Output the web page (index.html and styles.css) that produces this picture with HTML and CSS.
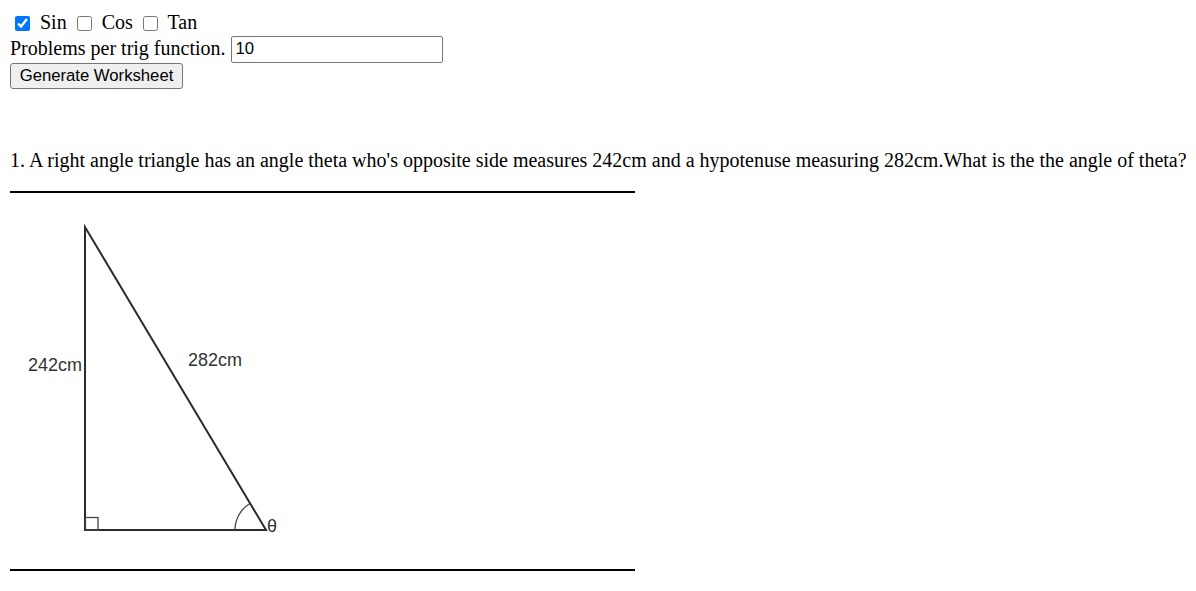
FILE: index.html
```html
<!DOCTYPE html>
<html>
<head>
<meta charset="utf-8">
<link rel="stylesheet" href="styles.css">
</head>
<body>
<div class="options"><input type="checkbox" class="cb" checked> Sin <input type="checkbox" class="cb"> Cos <input type="checkbox" class="cb"> Tan</div>
<div class="count-row">Problems per trig function. <input type="text" class="count" value="10"></div>
<div class="btn-row"><button class="gen">Generate Worksheet</button></div>
<div class="worksheet">
  <p class="question">1. A right angle triangle has an angle theta who's opposite side measures 242cm and a hypotenuse measuring 282cm.What is the the angle of theta?</p>
  <div class="rule"></div>
  <svg class="diagram" width="300" height="376" viewBox="0 0 300 376">
    <g fill="none" stroke="#2b2b2b" stroke-width="2">
      <path d="M75 34 L75 337 L256 337 Z" stroke-linejoin="miter"/>
    </g>
    <rect x="75.5" y="324.5" width="12.5" height="12.5" fill="none" stroke="#444" stroke-width="1.3"/>
    <path d="M225 337 A31 31 0 0 1 239.5 310.7" fill="none" stroke="#444" stroke-width="1.3"/>
    <text x="18" y="178" class="lbl">242cm</text>
    <text x="178" y="173" class="lbl">282cm</text>
    <text x="257" y="339" class="lbl">θ</text>
  </svg>
  <div class="rule"></div>
</div>
</body>
</html>
```
FILE: styles.css
```css
body {
  margin: 10px;
  font-family: "Liberation Serif", "Times New Roman", serif;
  font-size: 20px;
  color: #000;
  background: #fff;
}
.options {
  height: 24px;
  line-height: 24px;
}
.cb {
  width: 15px;
  height: 15px;
  margin: 0 5px 0 5px;
  vertical-align: -2px;
}
.count-row {
  height: 29px;
  line-height: 29px;
}
.count {
  box-sizing: border-box;
  width: 212px;
  height: 27px;
  margin: 0;
  padding: 1px 4px;
  font-family: "Liberation Sans", Arial, sans-serif;
  font-size: 16.7px;
  border: 1px solid #767676;
  border-radius: 2px;
  vertical-align: 1px;
}
.btn-row {
  height: 26px;
}
.gen {
  box-sizing: border-box;
  height: 26px;
  width: 173px;
  margin: 0;
  padding: 0 6px;
  font-family: "Liberation Sans", Arial, sans-serif;
  font-size: 16.7px;
  color: #000;
  background: #efefef;
  border: 1px solid #767676;
  border-radius: 3px;
}
.question {
  margin: 60px 0 0;
  line-height: 23px;
  white-space: nowrap;
}
.rule {
  width: 625px;
  height: 2px;
  background: #000;
}
.question + .rule {
  margin-top: 19px;
}
.diagram {
  display: block;
}
.lbl {
  font-family: "Liberation Sans", Arial, sans-serif;
  font-size: 18px;
  fill: #333;
}
```
